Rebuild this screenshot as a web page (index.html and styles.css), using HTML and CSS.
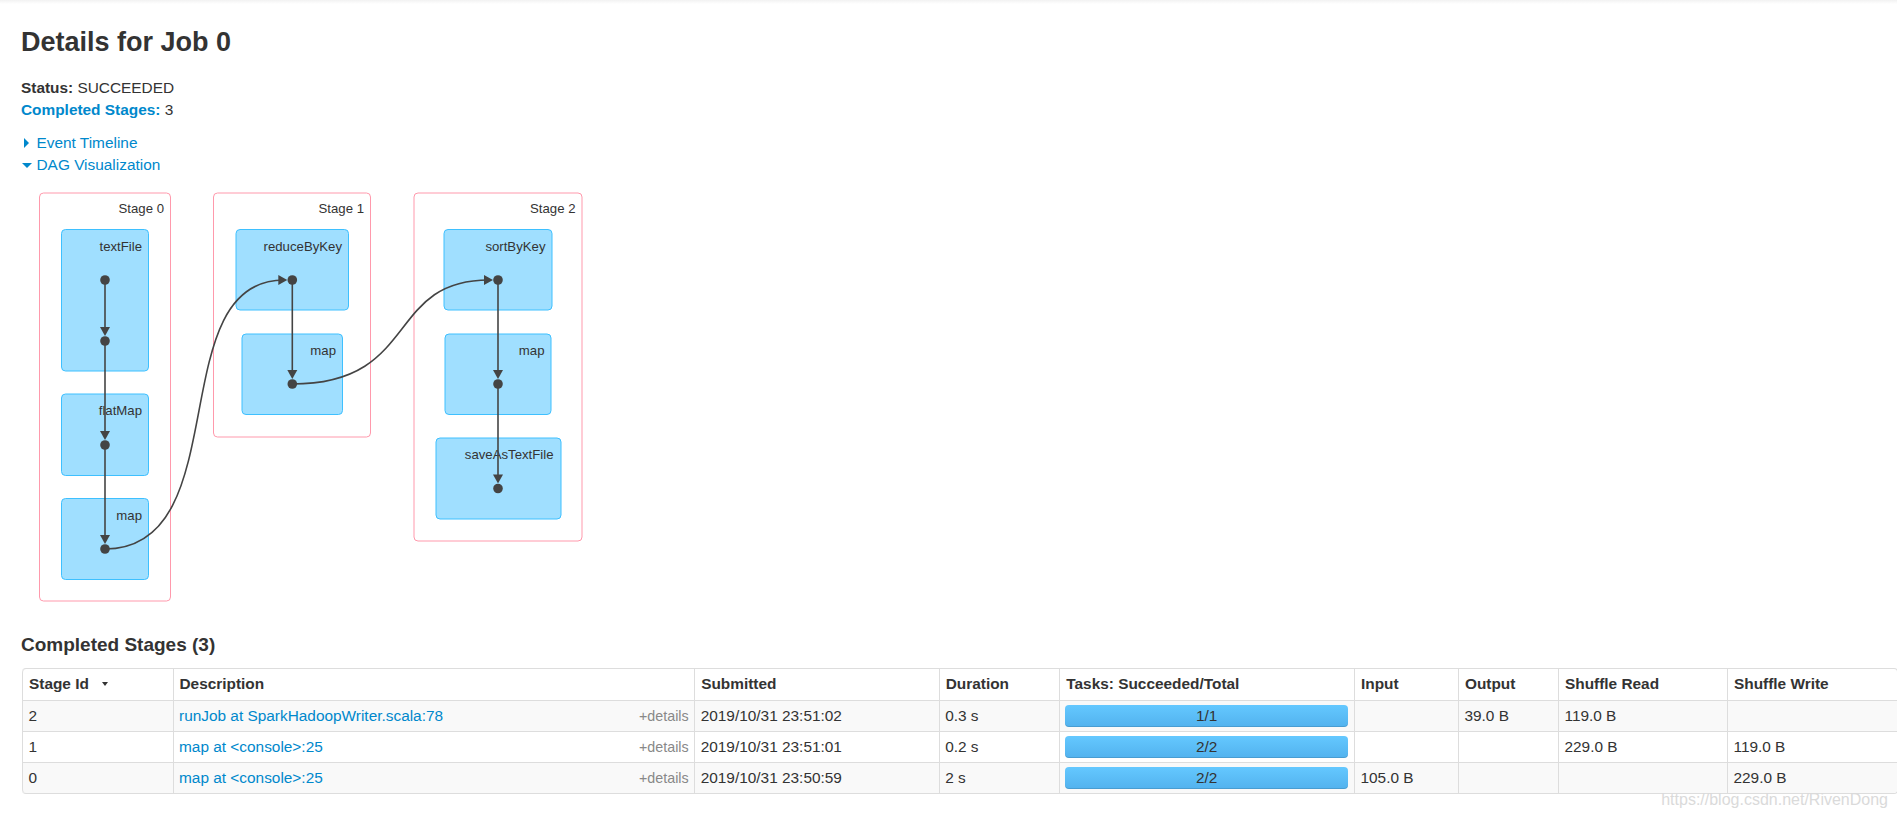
FILE: index.html
```html
<!DOCTYPE html>
<html>
<head>
<meta charset="utf-8">
<title>Details for Job 0</title>
<link rel="stylesheet" href="styles.css">
</head>
<body>
<div class="topbar"></div>
<div class="page">
  <h3 class="title">Details for Job 0</h3>
  <ul class="summary">
    <li><strong>Status:</strong> SUCCEEDED</li>
    <li><a class="link"><strong>Completed Stages:</strong></a> 3</li>
  </ul>
  <div class="toggles">
    <div class="toggle"><span class="arrow-closed"></span><a class="link">Event Timeline</a></div>
    <div class="toggle"><span class="arrow-open"></span><a class="link">DAG Visualization</a></div>
  </div>

  <svg class="dag" width="600" height="440" viewBox="21 180 600 440" xmlns="http://www.w3.org/2000/svg">
    <g class="stage">
      <rect x="39.5" y="193" width="131" height="408" rx="4" ry="4"/>
      <rect x="213.5" y="193" width="157" height="244" rx="4" ry="4"/>
      <rect x="414" y="193" width="168" height="348" rx="4" ry="4"/>
    </g>
    <g class="stage-label">
      <text x="164" y="213">Stage 0</text>
      <text x="364" y="213">Stage 1</text>
      <text x="575.5" y="213">Stage 2</text>
    </g>
    <g class="rdd">
      <rect x="61.5" y="229.5" width="87" height="141.5" rx="4" ry="4"/>
      <rect x="61.5" y="394" width="87" height="81.5" rx="4" ry="4"/>
      <rect x="61.5" y="498.5" width="87" height="81" rx="4" ry="4"/>
      <rect x="236" y="229.5" width="112.5" height="80.5" rx="4" ry="4"/>
      <rect x="242" y="334" width="100.5" height="80.5" rx="4" ry="4"/>
      <rect x="444" y="229.5" width="108" height="80.5" rx="4" ry="4"/>
      <rect x="445" y="334" width="106" height="80.5" rx="4" ry="4"/>
      <rect x="436" y="438" width="125" height="81" rx="4" ry="4"/>
    </g>
    <g class="rdd-label">
      <text x="142" y="250.5">textFile</text>
      <text x="142" y="415">flatMap</text>
      <text x="142" y="519.5">map</text>
      <text x="342" y="250.5">reduceByKey</text>
      <text x="336" y="355">map</text>
      <text x="545.5" y="250.5">sortByKey</text>
      <text x="544.5" y="355">map</text>
      <text x="553.5" y="459">saveAsTextFile</text>
    </g>
    <g class="edge">
      <line x1="105" y1="280" x2="105" y2="332"/>
      <line x1="105" y1="341" x2="105" y2="436"/>
      <line x1="105" y1="445" x2="105" y2="540"/>
      <line x1="292.3" y1="280" x2="292.3" y2="375"/>
      <line x1="498" y1="280" x2="498" y2="375"/>
      <line x1="498" y1="384" x2="498" y2="479.5"/>
      <path d="M105,549 C238,549 161,280 284,280"/>
      <path d="M292.3,384 C420,384 385,280 489,280"/>
    </g>
    <g class="arrow">
      <polygon points="100,327 110,327 105,336"/>
      <polygon points="100,431 110,431 105,440"/>
      <polygon points="100,535 110,535 105,544"/>
      <polygon points="287.3,370 297.3,370 292.3,379"/>
      <polygon points="493,370 503,370 498,379"/>
      <polygon points="493,474.5 503,474.5 498,483.5"/>
      <polygon points="278.3,275 278.3,285 287.3,280"/>
      <polygon points="484,275 484,285 493,280"/>
    </g>
    <g class="dot">
      <circle cx="105" cy="280" r="4.8"/>
      <circle cx="105" cy="341" r="4.8"/>
      <circle cx="105" cy="445" r="4.8"/>
      <circle cx="105" cy="549" r="4.8"/>
      <circle cx="292.3" cy="280" r="4.8"/>
      <circle cx="292.3" cy="384" r="4.8"/>
      <circle cx="498" cy="280" r="4.8"/>
      <circle cx="498" cy="384" r="4.8"/>
      <circle cx="498" cy="488.5" r="4.8"/>
    </g>
  </svg>

  <h4 class="section">Completed Stages (3)</h4>
  <table class="stages">
    <colgroup>
      <col class="w-id"><col class="w-desc"><col class="w-sub"><col class="w-dur"><col class="w-tasks"><col class="w-in"><col class="w-out"><col class="w-sr"><col class="w-sw">
    </colgroup>
    <thead>
      <tr>
        <th>Stage Id<span class="sort-arrow"></span></th>
        <th>Description</th>
        <th>Submitted</th>
        <th>Duration</th>
        <th>Tasks: Succeeded/Total</th>
        <th>Input</th>
        <th>Output</th>
        <th>Shuffle Read</th>
        <th>Shuffle Write</th>
      </tr>
    </thead>
    <tbody>
      <tr class="odd">
        <td>2</td>
        <td><a class="link">runJob at SparkHadoopWriter.scala:78</a><span class="details">+details</span></td>
        <td>2019/10/31 23:51:02</td>
        <td>0.3 s</td>
        <td class="tasks"><div class="bar">1/1</div></td>
        <td></td>
        <td>39.0 B</td>
        <td>119.0 B</td>
        <td></td>
      </tr>
      <tr>
        <td>1</td>
        <td><a class="link">map at &lt;console&gt;:25</a><span class="details">+details</span></td>
        <td>2019/10/31 23:51:01</td>
        <td>0.2 s</td>
        <td class="tasks"><div class="bar">2/2</div></td>
        <td></td>
        <td></td>
        <td>229.0 B</td>
        <td>119.0 B</td>
      </tr>
      <tr class="odd last">
        <td>0</td>
        <td><a class="link">map at &lt;console&gt;:25</a><span class="details">+details</span></td>
        <td>2019/10/31 23:50:59</td>
        <td>2 s</td>
        <td class="tasks"><div class="bar">2/2</div></td>
        <td>105.0 B</td>
        <td></td>
        <td></td>
        <td>229.0 B</td>
      </tr>
    </tbody>
  </table>
</div>
<div class="watermark">https://blog.csdn.net/RivenDong</div>
</body>
</html>
```
FILE: styles.css
```css
html, body {
  margin: 0;
  padding: 0;
  background: #ffffff;
  overflow: hidden;
}
body {
  font-family: "Liberation Sans", Arial, Helvetica, sans-serif;
  font-size: 15.4px;
  color: #333333;
  position: relative;
  height: 820px;
}
.topbar {
  height: 4px;
  background: linear-gradient(#f2f2f2, #ffffff);
}
.page {
  padding-left: 21px;
}
.title {
  margin: 22.6px 0 0 0;
  font-size: 27px;
  line-height: 30px;
  font-weight: bold;
  color: #333333;
}
.summary {
  list-style: none;
  margin: 20.4px 0 0 0;
  padding: 0;
  line-height: 22px;
}
.summary strong {
  font-weight: bold;
}
.link {
  color: #0088cc;
  text-decoration: none;
}
.toggles {
  margin-top: 10.7px;
  line-height: 22px;
}
.toggle {
  display: flex;
  align-items: center;
}
.arrow-closed {
  display: inline-block;
  width: 0;
  height: 0;
  border-top: 5px solid transparent;
  border-bottom: 5px solid transparent;
  border-left: 5px solid #0088cc;
  margin-left: 3px;
  margin-right: 7.5px;
}
.arrow-open {
  display: inline-block;
  width: 0;
  height: 0;
  border-left: 5px solid transparent;
  border-right: 5px solid transparent;
  border-top: 5px solid #0088cc;
  margin-left: 1px;
  margin-right: 4.5px;
  margin-top: 1px;
}
.dag {
  display: block;
  margin-top: 4.3px;
}
.dag .stage rect {
  fill: #ffffff;
  stroke: #ff99ac;
  stroke-width: 1px;
}
.dag .rdd rect {
  fill: #a0dfff;
  stroke: #3ec0ff;
  stroke-width: 1px;
}
.dag text {
  font-family: "Liberation Sans", Arial, sans-serif;
  font-size: 13.2px;
  fill: #333333;
  text-anchor: end;
}
.dag .edge line,
.dag .edge path {
  stroke: #444444;
  stroke-width: 1.6px;
  fill: none;
}
.dag .arrow polygon {
  fill: #444444;
}
.dag .dot circle {
  fill: #444444;
}
.section {
  margin: 14.3px 0 11.4px 0;
  font-size: 19px;
  line-height: 22px;
  font-weight: bold;
  color: #333333;
}
.stages {
  margin-left: 1px;
  width: 1876px;
  table-layout: fixed;
  border-collapse: separate;
  border-spacing: 0;
  border: 1px solid #dddddd;
  border-left: 0;
  border-radius: 4px;
  font-size: 15.4px;
  line-height: 20px;
}
.w-id { width: 150.5px; }
.w-desc { width: 521.7px; }
.w-sub { width: 244.5px; }
.w-dur { width: 120.6px; }
.w-tasks { width: 294.7px; }
.w-in { width: 104px; }
.w-out { width: 100px; }
.w-sr { width: 169px; }
.w-sw { width: 170px; }
.stages th,
.stages td {
  border-left: 1px solid #dddddd;
  border-top: 1px solid #dddddd;
  padding: 5px 5.5px;
  text-align: left;
  vertical-align: middle;
  white-space: nowrap;
  overflow: hidden;
}
.stages thead th {
  border-top: 0;
  padding-top: 5.6px;
  padding-bottom: 5.6px;
  padding-left: 6px;
  font-weight: bold;
}
.stages thead th:first-child {
  border-top-left-radius: 4px;
}
.stages tbody tr.odd td {
  background: #f9f9f9;
}
.stages tbody tr.last td:first-child {
  border-bottom-left-radius: 4px;
}
.stages tbody tr.last td:last-child {
  border-bottom-right-radius: 4px;
}
.sort-arrow {
  display: inline-block;
  width: 0;
  height: 0;
  border-left: 3px solid transparent;
  border-right: 3px solid transparent;
  border-top: 4px solid #333333;
  margin-left: 13px;
  vertical-align: middle;
  position: relative;
  top: -1px;
}
.details {
  float: right;
  font-size: 14.3px;
  color: #888888;
  margin-right: 0;
}
.stages td.tasks {
  padding: 4px 5.5px 4px 4.5px;
}
.bar {
  height: 22px;
  line-height: 22px;
  text-align: center;
  color: #333333;
  border-radius: 4px;
  background: linear-gradient(#64c8ff, #52b2ee);
  box-shadow: inset 0 -1px 0 rgba(0, 0, 0, 0.12);
}
.watermark {
  position: absolute;
  right: 9px;
  top: 791px;
  font-family: "Liberation Sans", Arial, sans-serif;
  font-size: 16px;
  color: #dadada;
}
```
